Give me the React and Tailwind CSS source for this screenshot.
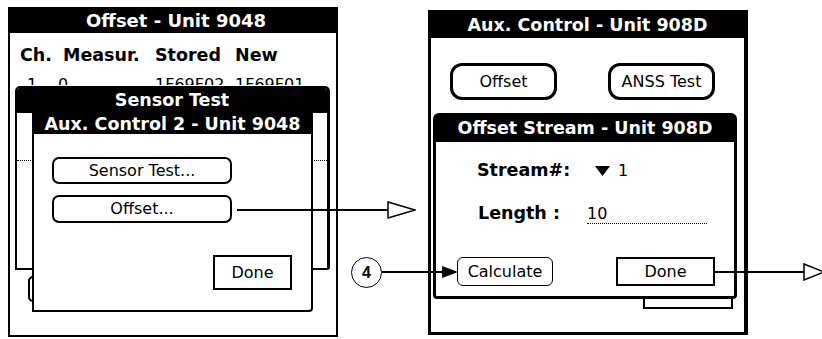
import React from "react";

const HollowHead = ({ className, w, h }) => (
  <svg className={className} width={w} height={h} viewBox={`0 0 ${w} ${h}`}>
    <polygon points={`1,1 ${w - 1},${h / 2} 1,${h - 1}`} fill="white" stroke="black" strokeWidth="1.5" />
  </svg>
);

export default function App() {
  return (
    <div className="relative w-[822px] h-[339px] overflow-hidden bg-white text-black font-['DejaVu_Sans',sans-serif]">
      <div className="flex items-start">
        {/* LEFT SCREEN */}
        <div className="relative ml-[8px] mt-[7px] w-[330px] h-[330px] shrink-0 border-2 border-black bg-white">
          <div className="h-[24px] bg-black text-white flex items-center justify-center pl-[6px] text-[18px] font-bold leading-none">
            Offset - Unit 9048
          </div>
          <div className="flex mt-[12px] pl-[10px] text-[17.5px] font-bold leading-[21px]">
            <span className="w-[43px]">Ch.</span>
            <span className="w-[92px]">Measur.</span>
            <span className="w-[80px]">Stored</span>
            <span>New</span>
          </div>
          <div className="mt-[10px] h-[9px] overflow-hidden">
            <div className="flex pl-[17px] text-[16px] leading-[19px] -mt-[1px]">
              <span className="w-[31px]">1</span>
              <span className="w-[97px]">0</span>
              <span className="w-[80px]">1F69F02</span>
              <span>1F69F01</span>
            </div>
          </div>

          {/* stub of hidden button */}
          <div className="absolute left-[18px] top-[267px] w-[12px] h-[26px] border-2 border-black rounded-l-[5px] bg-white" />

          {/* Sensor Test dialog */}
          <div className="absolute left-[5px] top-[77px] w-[315px] h-[184px] border-2 border-r-[3px] border-black rounded-t-[5px] rounded-br-[3px] bg-white overflow-hidden">
            <div className="h-[25px] bg-black text-white flex items-center justify-center text-[17.5px] font-bold leading-none">
              Sensor Test
            </div>
            <div className="absolute left-0 right-0 top-[72px] border-t border-dotted border-black" />
          </div>

          {/* Aux Control 2 dialog */}
          <div className="absolute left-[22px] top-[104px] w-[281px] h-[199px] border-2 border-black rounded-br-[4px] bg-white flex flex-col">
            <div className="h-[19px] bg-black text-white flex items-center justify-center text-[17.5px] font-bold leading-none">
              Aux. Control 2 - Unit 9048
            </div>
            <div className="ml-[18px] mt-[23px] w-[180px] h-[27px] border-2 border-black rounded-[7px] flex items-center justify-center text-[16px] leading-none">
              Sensor Test...
            </div>
            <div className="ml-[18px] mt-[11px] w-[180px] h-[28px] border-2 border-black rounded-[7px] flex items-center justify-center text-[16px] leading-none">
              Offset...
            </div>
            <div className="self-end mr-[19px] mt-[32px] w-[79px] h-[35px] border-2 border-black flex items-center justify-center text-[16px] leading-none">
              Done
            </div>
          </div>
        </div>

        {/* RIGHT SCREEN */}
        <div className="relative ml-[90px] mt-[10px] w-[320px] h-[325px] shrink-0 border-[3px] border-r-[4px] border-black bg-white flex flex-col">
          <div className="h-[25px] bg-black text-white flex items-center justify-center text-[17.5px] font-bold leading-none">
            Aux. Control - Unit 908D
          </div>
          <div className="flex mt-[25px] pl-[19px] gap-[51px]">
            <div className="w-[107px] h-[37px] border-[3px] border-black rounded-[12px] flex items-center justify-center text-[16px] leading-none">
              Offset
            </div>
            <div className="w-[107px] h-[37px] border-[3px] border-black rounded-[12px] flex items-center justify-center text-[16px] leading-none">
              ANSS Test
            </div>
          </div>

          {/* hidden button tab */}
          <div className="absolute left-[212px] top-[276px] w-[90px] h-[20px] border-2 border-black bg-white" />

          {/* Offset Stream dialog */}
          <div className="absolute left-[2px] top-[100px] w-[304px] h-[186px] border-[3px] border-black rounded-t-[6px] rounded-b-[4px] bg-white flex flex-col">
            <div className="h-[26px] bg-black text-white flex items-center justify-center text-[17.5px] font-bold leading-none">
              Offset Stream - Unit 908D
            </div>
            <div className="flex items-center mt-[18px] pl-[41px] leading-[21px]">
              <span className="w-[118px] text-[17.5px] font-bold">Stream#:</span>
              <svg width="15" height="10" viewBox="0 0 15 10" className="mt-[1px]">
                <polygon points="0,0 15,0 7.5,10" fill="black" />
              </svg>
              <span className="ml-[8px] text-[16px]">1</span>
            </div>
            <div className="flex items-center mt-[22px] pl-[42px] leading-[21px]">
              <span className="w-[109px] text-[17.5px] font-bold">Length :</span>
              <span className="w-[120px] border-b border-dotted border-black text-[16px] leading-[19px]">10</span>
            </div>
            <div className="flex justify-between mt-[33px] pl-[21px] pr-[19px]">
              <div className="w-[96px] h-[29px] border-[1.5px] border-black rounded-[6px] flex items-center justify-center text-[16px] leading-none">
                Calculate
              </div>
              <div className="w-[99px] h-[29px] border-2 border-black flex items-center justify-center text-[16px] leading-none">
                Done
              </div>
            </div>
          </div>
        </div>
      </div>

      {/* ARROWS (overlay) */}
      <div className="absolute left-[237px] top-[209px] w-[152px] h-[2px] bg-black" />
      <HollowHead className="absolute left-[387px] top-[201px]" w={29} h={18} />

      <div className="absolute left-[351px] top-[257px] w-[31px] h-[31px] rounded-full border-[1.5px] border-black bg-white flex items-center justify-center text-[16px] font-bold leading-none font-['Liberation_Sans',sans-serif]">
        4
      </div>
      <div className="absolute left-[382px] top-[271px] w-[62px] h-[2px] bg-black" />
      <svg className="absolute left-[442px] top-[266px]" width="16" height="12" viewBox="0 0 16 12">
        <polygon points="0,0 16,6 0,12" fill="black" />
      </svg>

      <div className="absolute left-[715px] top-[271px] w-[90px] h-[2px] bg-black" />
      <HollowHead className="absolute left-[803px] top-[263px]" w={22} h={18} />
    </div>
  );
}
